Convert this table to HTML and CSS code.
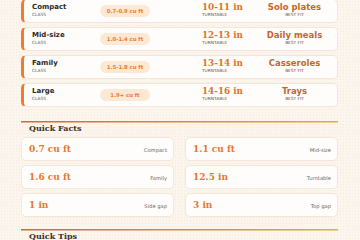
FILE: index.html
```html
<!DOCTYPE html>
<html lang="en">
<head>
<meta charset="utf-8">
<title>Microwave Sizes</title>
<link rel="stylesheet" href="styles.css">
</head>
<body>
<div class="page">
  <div class="rows">
    <div class="row">
      <div class="cell"><div class="name">Compact</div><div class="lbl">Class</div></div>
      <div class="pill">0.7-0.9 cu ft</div>
      <div class="cell"><div class="tt">10-11 in</div><div class="lbl">Turntable</div></div>
      <div class="cell center"><div class="fit">Solo plates</div><div class="lbl">Best fit</div></div>
    </div>
    <div class="row">
      <div class="cell"><div class="name">Mid-size</div><div class="lbl">Class</div></div>
      <div class="pill">1.0-1.4 cu ft</div>
      <div class="cell"><div class="tt">12-13 in</div><div class="lbl">Turntable</div></div>
      <div class="cell center"><div class="fit">Daily meals</div><div class="lbl">Best fit</div></div>
    </div>
    <div class="row">
      <div class="cell"><div class="name">Family</div><div class="lbl">Class</div></div>
      <div class="pill">1.5-1.8 cu ft</div>
      <div class="cell"><div class="tt">13-14 in</div><div class="lbl">Turntable</div></div>
      <div class="cell center"><div class="fit">Casseroles</div><div class="lbl">Best fit</div></div>
    </div>
    <div class="row">
      <div class="cell"><div class="name">Large</div><div class="lbl">Class</div></div>
      <div class="pill">1.9+ cu ft</div>
      <div class="cell"><div class="tt">14-16 in</div><div class="lbl">Turntable</div></div>
      <div class="cell center"><div class="fit">Trays</div><div class="lbl">Best fit</div></div>
    </div>
  </div>

  <h2 class="sec-h">Quick Facts</h2>
  <div class="facts">
    <div class="fact"><span class="fv">0.7 cu ft</span><span class="fl">Compact</span></div>
    <div class="fact"><span class="fv">1.1 cu ft</span><span class="fl">Mid-size</span></div>
    <div class="fact"><span class="fv">1.6 cu ft</span><span class="fl">Family</span></div>
    <div class="fact"><span class="fv">12.5 in</span><span class="fl">Turntable</span></div>
    <div class="fact"><span class="fv">1 in</span><span class="fl">Side gap</span></div>
    <div class="fact"><span class="fv">3 in</span><span class="fl">Top gap</span></div>
  </div>

  <h2 class="sec-h tips">Quick Tips</h2>
</div>
</body>
</html>
```

FILE: styles.css
```css
html, body {
  margin: 0;
  padding: 0;
}
body {
  background-color: #fcf5ed;
  background-image: radial-gradient(circle, rgba(232, 205, 178, 0.28) 0.6px, transparent 0.9px);
  background-size: 3px 3px;
  font-family: "DejaVu Sans", sans-serif;
  color: #2c2825;
}
.page {
  margin-top: -1px;
  padding: 0 22px 0 21px;
  display: flex;
  flex-direction: column;
}
.rows {
  display: flex;
  flex-direction: column;
  gap: 4px;
}
.row {
  box-sizing: border-box;
  height: 24px;
  display: grid;
  grid-template-columns: 68px 102px 58px 1fr;
  align-items: start;
  padding: 2px 8px;
  background: #fffdfb;
  border: 1px solid #f4e5d6;
  border-left: 3px solid #f07a30;
  border-radius: 5px;
}
.cell.center {
  text-align: center;
}
.name {
  font-weight: 700;
  font-size: 7px;
  line-height: 11px;
  color: #2c2825;
}
.lbl {
  font-size: 4.3px;
  line-height: 4.5px;
  color: #555;
  text-transform: uppercase;
  white-space: nowrap;
}
.pill {
  align-self: center;
  width: 50px;
  height: 12px;
  border-radius: 6px;
  background: #fde8d3;
  color: #ec7a33;
  font-weight: 700;
  font-size: 5.3px;
  display: flex;
  align-items: center;
  justify-content: center;
  white-space: nowrap;
}
.tt {
  font-family: "DejaVu Serif", serif;
  font-weight: 700;
  font-size: 8.8px;
  line-height: 11px;
  color: #e3722d;
  white-space: nowrap;
}
.fit {
  font-weight: 700;
  font-size: 8.5px;
  line-height: 11px;
  color: #c8652b;
  white-space: nowrap;
}
.sec-h {
  margin: 14px 0 4px;
  padding: 2px 0 0 8px;
  background: linear-gradient(90deg, #d6682c, #f1a43c) left top / 100% 1.5px no-repeat;
  font-family: "DejaVu Serif", serif;
  font-weight: 700;
  font-size: 8px;
  line-height: 10px;
  color: #3b2f27;
}
.sec-h.tips {
  margin-top: 12px;
}
.facts {
  display: grid;
  grid-template-columns: 1fr 1fr;
  gap: 4px 11px;
}
.fact {
  box-sizing: border-box;
  height: 24px;
  display: flex;
  justify-content: space-between;
  align-items: baseline;
  padding: 5px 6px 0 7px;
  background: #fffdfb;
  border: 1px solid #f4e6d9;
  border-radius: 5px;
}
.fv {
  font-family: "DejaVu Serif", serif;
  font-weight: 700;
  font-size: 9px;
  line-height: 12px;
  color: #ea7630;
  white-space: nowrap;
}
.fl {
  font-size: 5.2px;
  color: #666;
  white-space: nowrap;
}
```
